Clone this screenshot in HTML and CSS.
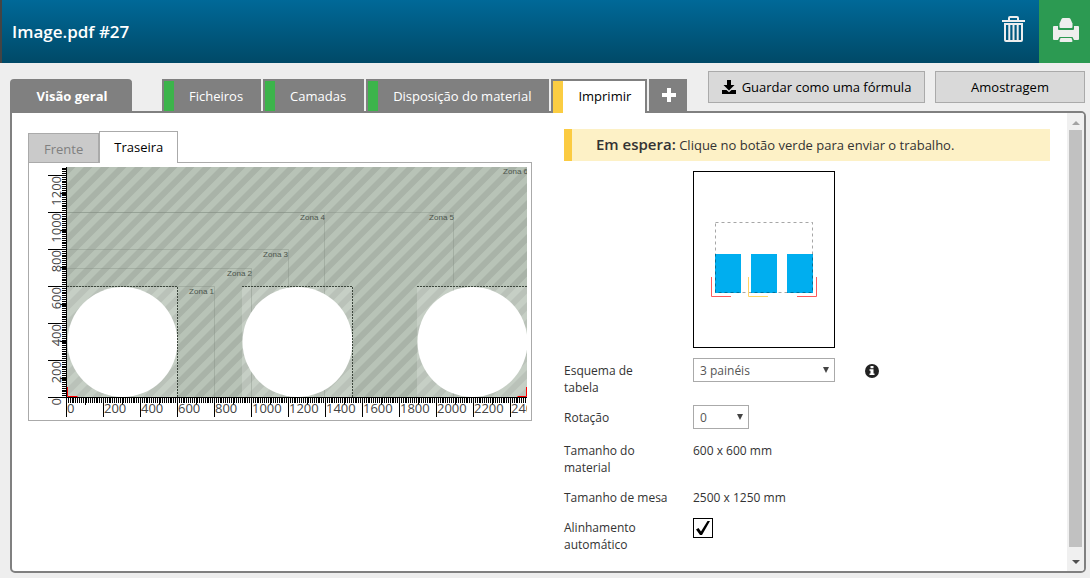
FILE: index.html
```html
<!DOCTYPE html>
<html lang="pt">
<head>
<meta charset="utf-8">
<title>Image.pdf #27</title>
<link rel="stylesheet" href="styles.css">
</head>
<body>
<header class="header">
  <h1 class="title">Image.pdf #27</h1>
  <button class="icon-btn" aria-label="Eliminar">
    <svg width="23" height="27" viewBox="0 0 23 27" fill="none" stroke="#eee" stroke-width="2"><path d="M0 6h23" /><path d="M7 5V3q0-1 1-1h7q1 0 1 1v2"/><path d="M3 9v16q0 1 1 1h15q1 0 1-1V9z"/><path d="M7.300 9v17M11.500 9v17M15.700 9v17"/></svg>
  </button>
  <button class="icon-btn print-btn" aria-label="Imprimir">
    <svg width="26" height="26" viewBox="0 0 26 26" fill="#eee"><path d="M6.500 11V7.500l2-4.500q.5-1 1.500-1h6q1 0 1.500 1l2 4.500V11q0 1-1 1h-11q-1 0-1-1z"/><path d="M1 10h4v3q0 1 1 1h14q1 0 1-1v-3h4q1 0 1 1v12q0 1-1 1h-4l-1.500-3h-13L5 24H1q-1 0-1-1V11q0-1 1-1z"/><path d="M7.500 22h11l1 3q0 1-1 1h-11q-1 0-1-1z"/></svg>
  </button>
</header>

<main class="main">
  <div class="toolbar">
    <nav class="tabs">
      <button class="tab tab-overview">Visão geral</button>
      <button class="tab done">Ficheiros</button>
      <button class="tab done">Camadas</button>
      <button class="tab done">Disposição do material</button>
      <button class="tab active">Imprimir</button>
      <button class="tab tab-add" aria-label="Adicionar"><svg width="14" height="14" viewBox="0 0 14 14"><path d="M7 0v14M0 7h14" stroke="#fff" stroke-width="4"/></svg></button>
    </nav>
    <div class="actions">
      <button class="action"><svg width="14" height="14" viewBox="0 0 14 14"><path d="M5 0h4v5h3.500L7 10.500 1.500 5H5z"/><path d="M0 10h4.500L7 12.200 9.500 10H14v4H0z"/></svg>Guardar como uma fórmula</button>
      <button class="action sample">Amostragem</button>
    </div>
  </div>

  <div class="panel">
    <div class="content">
      <section class="preview">
        <div class="side-tabs">
          <button class="side-tab">Frente</button>
          <button class="side-tab selected">Traseira</button>
        </div>
        <div class="viewer">
          <svg class="board" viewBox="29 163 502 257" role="img" aria-label="Disposição na mesa">
            <defs>
              <pattern id="stripes" width="17" height="17" patternUnits="userSpaceOnUse" patternTransform="translate(67 167)">
                <rect width="17" height="17" fill="#a9b3a8"/>
                <path d="M0 17L17 0h-8.500L0 8.500zM17 17V8.500L8.500 17z" fill="#b8c3b7"/>
              </pattern>
              <clipPath id="area"><rect x="67" y="167" width="460" height="230"/></clipPath>
              <clipPath id="ruler"><rect x="66" y="397" width="461" height="22"/></clipPath>
            </defs>
            <g clip-path="url(#area)">
              <rect x="67" y="167" width="460" height="230" fill="url(#stripes)"/>
              <g fill="#fff" fill-opacity=".2">
                <rect x="67" y="287" width="111" height="110"/>
                <rect x="242" y="287" width="111" height="110"/>
                <rect x="417" y="287" width="111" height="110"/>
              </g>
              <g class="zones">
                <path d="M67 286.500H214.500V397M67 268.500H251.500V397M67 249.500H288.500V397M67 212.500H324.500V397M67 212.500H453.500V397"/>
              </g>
              <g fill="#fff">
                <circle cx="122.500" cy="342" r="55"/>
                <circle cx="297.500" cy="342" r="55"/>
                <circle cx="472.500" cy="342" r="55"/>
              </g>
              <path class="cut" d="M67 286.500H177.500V397M242 286.500H352.500V397M417 286.500H527.500V397"/>
              <path class="corner" d="M67.500 387v9.500h10M526.500 387v9.500h-9"/>
              <g class="zone-labels">
                <text x="214" y="294">Zona 1</text>
                <text x="252" y="276">Zona 2</text>
                <text x="288" y="257">Zona 3</text>
                <text x="325" y="220">Zona 4</text>
                <text x="454" y="220">Zona 5</text>
                <text x="528" y="174">Zona 6</text>
              </g>
            </g>
            <g clip-path="url(#ruler)">
              <path class="minor" d="M66 400H527"/>
              <path class="mid" d="M85 401H527"/>
              <path class="major" d="M66 407H527"/>
              <g class="numbers">
                <text x="67" y="413">0</text><text x="104" y="413">200</text><text x="141" y="413">400</text><text x="178" y="413">600</text><text x="215" y="413">800</text><text x="252" y="413">1000</text><text x="289" y="413">1200</text><text x="326" y="413">1400</text><text x="363" y="413">1600</text><text x="400" y="413">1800</text><text x="437" y="413">2000</text><text x="474" y="413">2200</text><text x="511" y="413">2400</text>
              </g>
            </g>
            <path class="minor" d="M64 398V167"/>
            <path class="mid" d="M63 379V167"/>
            <path class="major" d="M57 398V167"/>
            <path class="axis" d="M66.500 167V397.500H527"/>
            <g class="numbers up">
              <text transform="translate(61 398) rotate(-90)">0</text><text transform="translate(61 361) rotate(-90)">200</text><text transform="translate(61 324) rotate(-90)">400</text><text transform="translate(61 287) rotate(-90)">600</text><text transform="translate(61 250) rotate(-90)">800</text><text transform="translate(61 213) rotate(-90)">1000</text><text transform="translate(61 176) rotate(-90)">1200</text>
            </g>
          </svg>
        </div>
      </section>

      <section class="details">
        <p class="notice"><strong>Em espera:</strong> Clique no botão verde para enviar o trabalho.</p>
        <svg class="table-map" width="142" height="177" viewBox="0 0 142 177" role="img" aria-label="Esquema de tabela">
          <rect x=".5" y=".5" width="141" height="176" fill="#fff" stroke="#000"/>
          <path d="M22 83h26v39H22zM58 83h26v39H58zM94 83h26v39H94z" fill="#00aeef"/>
          <rect x="22.500" y="51.500" width="97" height="70" fill="none" stroke="#000" stroke-opacity=".35" stroke-dasharray="3 3"/>
          <path d="M18.500 106v19.500H38M123.500 106v19.500H104" fill="none" stroke="#ff5a5a"/>
          <path d="M55.500 106v19.500H75" fill="none" stroke="#ffd566"/>
        </svg>
        <div class="form">
          <label for="layout">Esquema de tabela</label>
          <div class="field"><span class="select-box wide"><select id="layout"><option>3 painéis</option></select></span>
            <svg class="info" width="14" height="14" viewBox="0 0 14 14"><circle cx="7" cy="7" r="7" fill="#222"/><path d="M5.500 2h3v2.200h-3zM4.500 5.300h4v4.200h1V11h-5V9.500h1V6.800h-1z" fill="#fff"/></svg></div>
          <label for="rotation">Rotação</label>
          <div class="field"><span class="select-box"><select id="rotation"><option>0</option></select></span></div>
          <span class="name">Tamanho do material</span><span class="value">600 x 600 mm</span>
          <span class="name">Tamanho de mesa</span><span class="value">2500 x 1250 mm</span>
          <label for="align">Alinhamento automático</label>
          <div class="field check"><input type="checkbox" id="align" checked><svg width="14" height="14" viewBox="0 0 14 14"><path d="M0 8.500L2.500 7 5 10.500 11.500 0H14L6 14H4z"/></svg></div>
        </div>
      </section>
    </div>
    <div class="scrollbar">
      <svg width="8" height="4" viewBox="0 0 8 4"><path d="M4 0l4 4H0z" fill="#a3a3a3"/></svg>
      <span class="thumb"></span>
      <svg width="8" height="4" viewBox="0 0 8 4"><path d="M0 0h8L4 4z" fill="#505050"/></svg>
    </div>
  </div>
</main>
</body>
</html>
```

FILE: styles.css
```css
* { box-sizing: border-box; }
body {
  margin: 0;
  min-height: 100vh;
  display: flex;
  flex-direction: column;
  background: #eee;
  color: #333;
  font: 12px/17px "Open Sans", "Noto Sans", sans-serif;
}
button { font: inherit; border: 0; padding: 0; cursor: pointer; }
svg { display: block; flex: none; }

.header {
  display: flex;
  height: 63px;
  border-left: 2px solid #444;
  background: linear-gradient(#006998, #004967);
}
.title {
  flex: 1;
  margin: 0;
  padding-left: 10px;
  color: #fff;
  font-size: 17px;
  font-weight: 600;
  line-height: 63px;
}
.icon-btn {
  display: flex;
  align-items: center;
  justify-content: center;
  width: 52px;
  padding-bottom: 6px;
  background: none;
}
.print-btn { width: 51px; padding: 0 0 5px 3px; background: #2c9a52; }

.main { flex: 1; display: flex; flex-direction: column; padding: 8px 4px 5px 10px; }
.toolbar { display: flex; justify-content: space-between; padding-right: 1px; }
.tabs { display: flex; gap: 2px; padding-top: 8px; margin-bottom: -2px; z-index: 1; }
.tab {
  height: 34px;
  padding: 0 18px 0 15px;
  border: 0 solid #808080;
  border-width: 2px 0 2px 2px;
  background: #808080;
  color: #fff;
  font-size: 13px;
}
.tab-overview {
  width: 122px;
  margin-right: 28px;
  padding: 0;
  border-radius: 4px 4px 0 0;
  font-weight: 700;
}
.done, .active { display: flex; align-items: center; gap: 15px; padding-left: 0; }
.done::before, .active::before { content: ""; width: 10px; height: 30px; background: #3cb44b; }
.active { padding: 0 14px 2px 0; border-width: 2px 2px 0 2px; background: #fff; color: #000; }
.active::before { height: 32px; margin-bottom: -2px; background: #fbcd42; }
.tab-add { display: grid; place-items: center; width: 38px; padding: 0 0 2px; }

.actions { display: flex; gap: 10px; height: 40px; }
.action {
  display: flex;
  align-items: center;
  justify-content: center;
  gap: 6px;
  width: 217px;
  height: 32px;
  border: 1px solid #aaa;
  background: #d9d9d9;
  color: #000;
  font-size: 13px;
}
.sample { width: 150px; }

.panel {
  flex: 1;
  display: flex;
  border: 2px solid #808080;
  border-radius: 0 5px 5px 5px;
  background: #fff;
  overflow: hidden;
}
.content {
  flex: 1;
  display: grid;
  grid-template-columns: 504fr 486fr;
  align-items: start;
  gap: 32px;
  padding: 16px 17px 16px 16px;
}
.side-tabs { display: flex; align-items: flex-end; padding-top: 2px; }
.side-tab {
  height: 29px;
  padding: 2px 15px 0;
  border: 1px solid #aaa;
  border-bottom: 0;
  background: #cacaca;
  color: #808080;
  font-size: 13px;
}
.selected {
  z-index: 1;
  height: 32px;
  padding: 0 14px;
  margin-bottom: -1px;
  background: #fff;
  color: #000;
}
.viewer { border: 1px solid #aaa; }
.board { width: 100%; }
.zones path { fill: none; stroke: #7d897d; stroke-opacity: .35; }
.cut { fill: none; stroke: #3c463c; stroke-dasharray: 2 1; }
.corner { fill: none; stroke: #f00; stroke-width: 1px; }
.zone-labels { fill: #4c554c; font: 8px "Liberation Sans", sans-serif; text-anchor: end; }
.minor, .mid, .major { fill: none; stroke: #000; shape-rendering: crispEdges; }
.minor { stroke-width: 5px; stroke-dasharray: 1 .85; }
.mid { stroke-width: 7px; stroke-dasharray: 1 36; }
.major { stroke-width: 19px; stroke-dasharray: 1 36; }
.axis { fill: none; stroke: #000; }
.numbers { fill: #444; font: 13px "Open Sans", "Noto Sans", sans-serif; }
.up { text-anchor: end; }

.notice {
  margin: 0 0 10px;
  padding: 0 24px;
  border-left: 8px solid #fbcb42;
  background: #fdf1c6;
  font-size: 13px;
  line-height: 32px;
}
.notice strong { font-size: 15px; font-weight: 600; line-height: 1; }
.table-map { margin: 0 0 10px 129px; }
.form {
  display: grid;
  grid-template-columns: 105px 1fr;
  column-gap: 24px;
  row-gap: 9px;
}
.form label, .name, .value { padding-top: 4px; }
.field { display: flex; align-items: flex-start; }
.select-box { position: relative; width: 56px; }
.select-box::after {
  content: "";
  position: absolute;
  right: 6px;
  top: 9px;
  border: 3px solid transparent;
  border-top: 6px solid #444;
  border-bottom: 0;
  pointer-events: none;
}
.wide { width: 142px; }
.select-box select {
  appearance: none;
  display: block;
  width: 100%;
  height: 24px;
  padding: 0 6px;
  border: 1px solid #aaa;
  border-radius: 0;
  background: #fff;
  color: #555;
  font: inherit;
}
.info { margin: 6px 0 0 30px; }
.check { display: grid; justify-content: start; padding-top: 3px; }
.check input, .check svg { grid-area: 1 / 1; }
.check input { appearance: none; width: 20px; height: 20px; margin: 0; border: 1px solid #000; background: #fff; }
.check svg { margin: 3px; pointer-events: none; }

.scrollbar {
  display: flex;
  flex-direction: column;
  align-items: center;
  gap: 5px;
  flex: none;
  width: 17px;
  padding: 8px 0 7px;
  background: #f0f0f0;
}
.thumb { flex: 1; width: 13px; margin-bottom: 8px; background: #c1c1c1; }
```
